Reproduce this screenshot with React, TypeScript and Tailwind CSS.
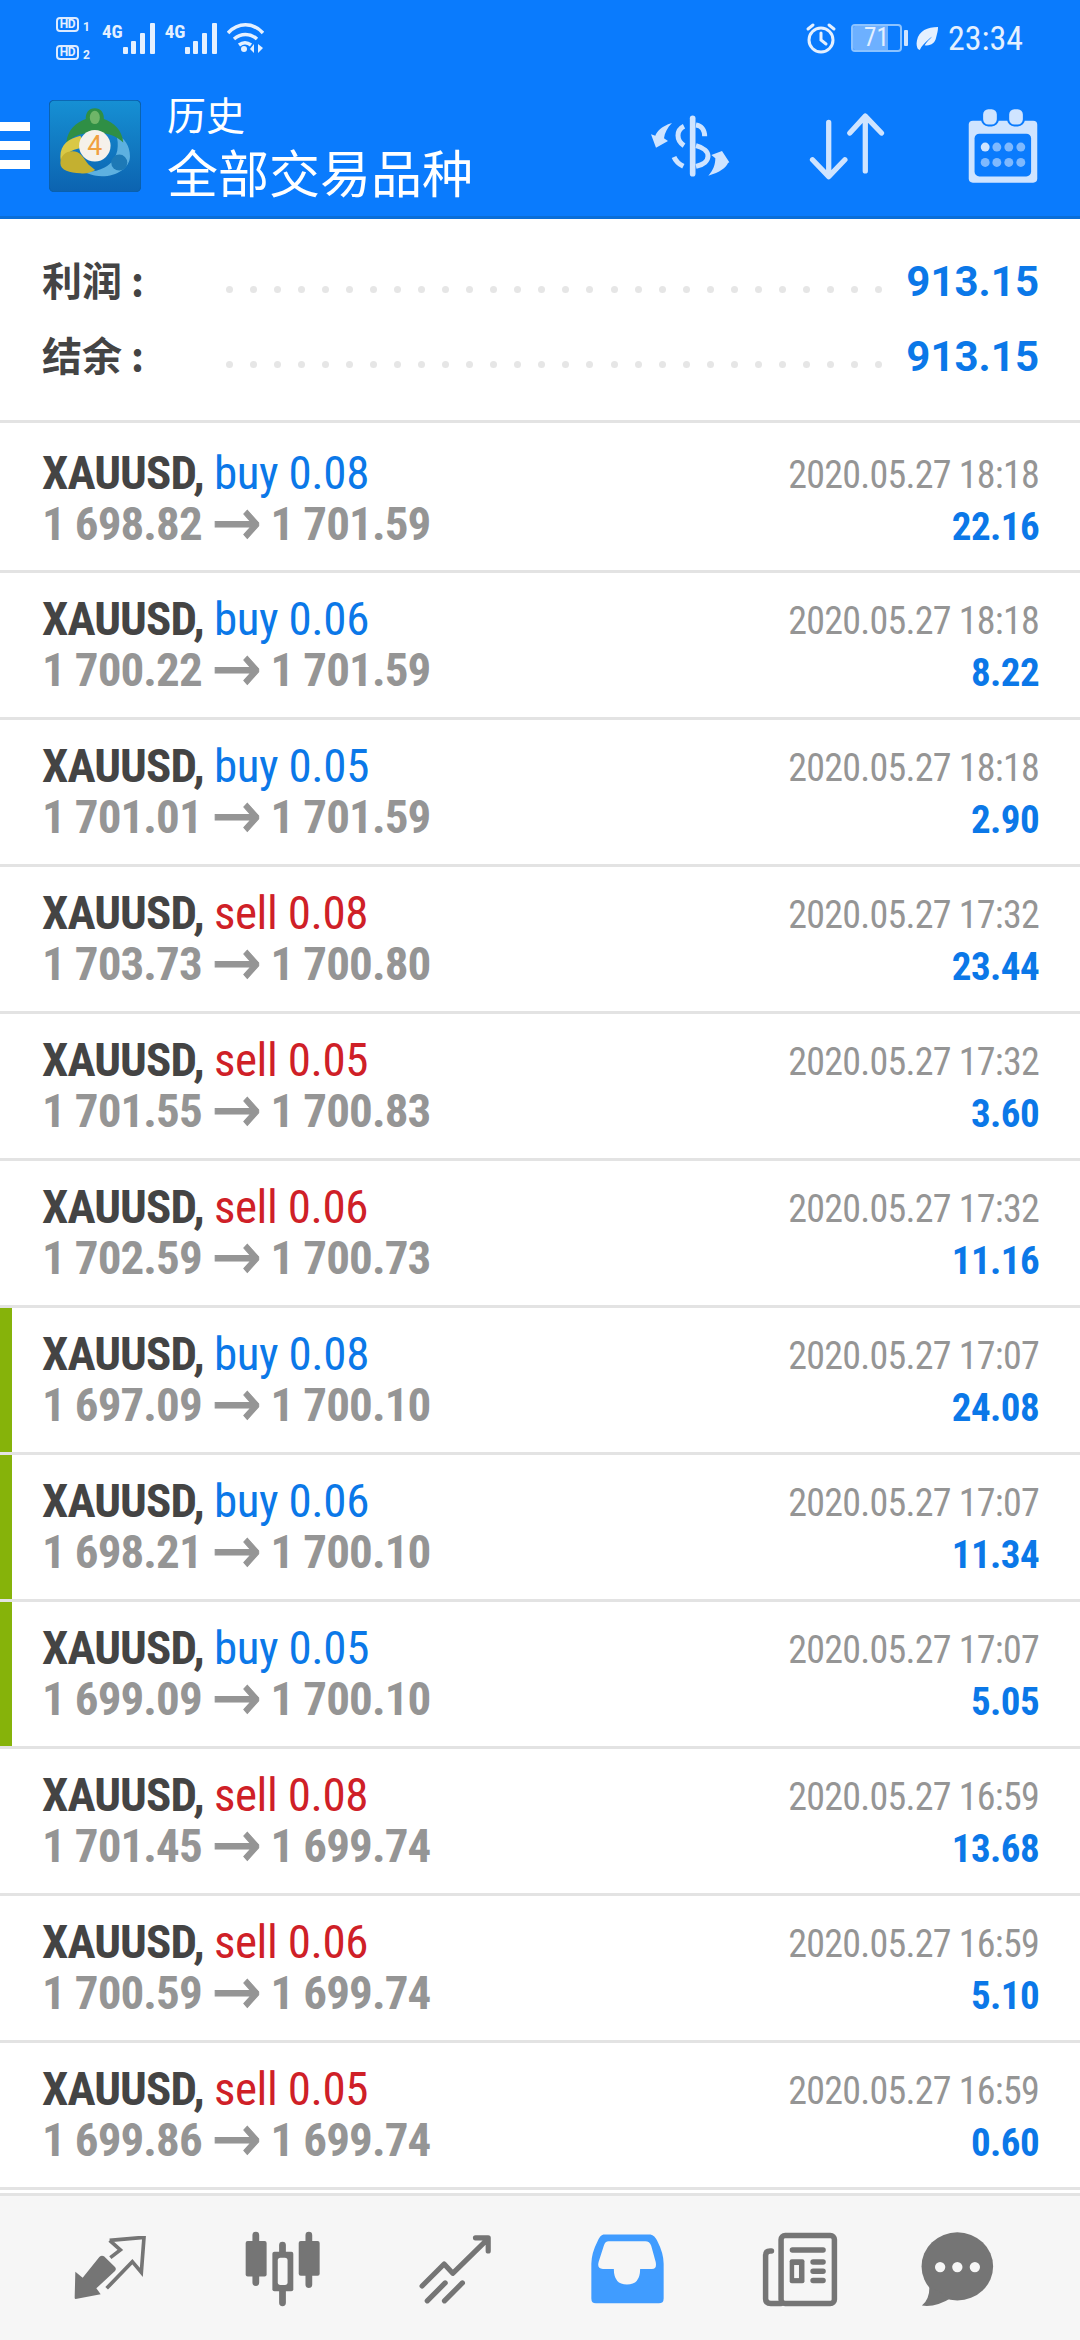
const G = "#757575";
const L = "#cfe4ff";
const BLUE = "#0a7bfd";

const trades = [
  { side: "buy", vol: "0.08", open: "1 698.82", close: "1 701.59", time: "2020.05.27 18:18", profit: "22.16", mark: false },
  { side: "buy", vol: "0.06", open: "1 700.22", close: "1 701.59", time: "2020.05.27 18:18", profit: "8.22", mark: false },
  { side: "buy", vol: "0.05", open: "1 701.01", close: "1 701.59", time: "2020.05.27 18:18", profit: "2.90", mark: false },
  { side: "sell", vol: "0.08", open: "1 703.73", close: "1 700.80", time: "2020.05.27 17:32", profit: "23.44", mark: false },
  { side: "sell", vol: "0.05", open: "1 701.55", close: "1 700.83", time: "2020.05.27 17:32", profit: "3.60", mark: false },
  { side: "sell", vol: "0.06", open: "1 702.59", close: "1 700.73", time: "2020.05.27 17:32", profit: "11.16", mark: false },
  { side: "buy", vol: "0.08", open: "1 697.09", close: "1 700.10", time: "2020.05.27 17:07", profit: "24.08", mark: true },
  { side: "buy", vol: "0.06", open: "1 698.21", close: "1 700.10", time: "2020.05.27 17:07", profit: "11.34", mark: true },
  { side: "buy", vol: "0.05", open: "1 699.09", close: "1 700.10", time: "2020.05.27 17:07", profit: "5.05", mark: true },
  { side: "sell", vol: "0.08", open: "1 701.45", close: "1 699.74", time: "2020.05.27 16:59", profit: "13.68", mark: false },
  { side: "sell", vol: "0.06", open: "1 700.59", close: "1 699.74", time: "2020.05.27 16:59", profit: "5.10", mark: false },
  { side: "sell", vol: "0.05", open: "1 699.86", close: "1 699.74", time: "2020.05.27 16:59", profit: "0.60", mark: false },
];

const Logo = () => (
  <svg width="92" height="92" viewBox="28 33 275 275" className="shrink-0">
    <defs>
      <linearGradient id="lg" x1="0" y1="0" x2="0" y2="1">
        <stop offset="0" stopColor="#1690d4" />
        <stop offset="1" stopColor="#0c63b0" />
      </linearGradient>
    </defs>
    <rect x="29" y="34" width="273" height="273" rx="14" fill="url(#lg)" stroke="#0a5ea8" strokeWidth="3" />
    <path d="M228 135c26 12 42 36 42 66 0 34-38 60-84 60-24 0-44-8-58-14 26 2 48-2 66-12 22-12 32-26 38-50 3-16 2-34-4-50z" fill="#5db0e0" />
    <circle cx="238" cy="220" r="24" fill="#1d79b6" />
    <path d="M165 58c18 0 28 14 27 32 30 10 55 34 58 70-24-22-50-30-85-28-35-2-61 6-85 28 3-36 28-60 58-70-1-18 9-32 27-32z" fill="#2f8f45" />
    <ellipse cx="165" cy="85" rx="15" ry="20" fill="#6fb568" />
    <path d="M122 140c-34 8-60 26-60 62 0 8 2 14 4 18 10-30 40-44 70-44z" fill="#d9c845" />
    <path d="M62 222c0-22 16-36 36-36 24 0 32 18 48 40l20 16c-12 8-28 12-44 10-32-2-60-8-60-30z" fill="#c4b030" />
    <circle cx="165" cy="170" r="47" fill="#f5f1ea" />
    <text x="165" y="198" textAnchor="middle" fontSize="80" fontFamily="Roboto, sans-serif" fill="#f0a040">4</text>
  </svg>
);

const DollarIcon = () => (
  <svg width="100" height="90" viewBox="0 0 300 270" fill={L}>
    <g fill="none" stroke={L} strokeWidth="15">
      <path d="M158 52V218" strokeWidth="17" strokeLinecap="round" />
      <path d="M132 76C108 88 108 118 132 134" />
      <path d="M168 72C184 74 194 86 194 106" />
      <path d="M168 134C216 146 216 186 168 196" />
      <path d="M102 168C108 182 118 190 130 196" />
    </g>
    <path d="M96 66C62 76 50 94 46 104L33 100L48 140L84 120L72 112C74 96 82 80 96 66Z" />
    <path d="M205 224C240 214 258 200 264 186L268 184L246 150L214 162L226 172C226 190 220 208 205 224Z" />
  </svg>
);

const SortIcon = () => (
  <svg width="76" height="70" viewBox="780 340 216 198" fill="none" stroke={L} strokeWidth="15" strokeLinecap="round" strokeLinejoin="round">
    <path d="M836 372V525M790 478l46 48 46-48" />
    <path d="M940 510V354M896 402l44-48 46 48" />
  </svg>
);

const CalendarIcon = () => (
  <svg width="70" height="74" viewBox="1243 328 200 216">
    <rect x="1243" y="362" width="200" height="181" rx="12" fill={L} />
    <rect x="1260" y="400" width="165" height="125" rx="14" fill={BLUE} />
    <rect x="1282" y="326" width="46" height="50" rx="18" fill={L} stroke={BLUE} strokeWidth="6" />
    <rect x="1358" y="326" width="46" height="50" rx="18" fill={L} stroke={BLUE} strokeWidth="6" />
    <circle cx="1291" cy="439" r="13" fill={L} />
    {[1325, 1360, 1395].map((x) => <circle key={x} cx={x} cy="439" r="13" fill="#7fb9fe" />)}
    {[1291, 1325, 1360, 1395].map((x) => <circle key={x} cx={x} cy="484" r="13" fill="#7fb9fe" />)}
  </svg>
);

const Signal = () => (
  <svg width="33" height="31" viewBox="0 0 33 31" fill="#e4f0ff" className="shrink-0">
    <rect x="0" y="24" width="5" height="7" rx="1" />
    <rect x="8" y="18" width="5" height="13" rx="1" />
    <rect x="17" y="10" width="5" height="21" rx="1" />
    <rect x="27" y="0" width="5" height="31" rx="1" />
  </svg>
);

const Wifi = () => (
  <svg width="37" height="30" viewBox="0 0 37 30" fill="none" stroke="#e4f0ff" strokeWidth="3.5" className="shrink-0">
    <path d="M1 10c10-11 25-11 35 0M7 16c7-6 16-6 23 0M12 22c4-3 8-3 12 0" />
    <circle cx="17" cy="26" r="3" fill="#e4f0ff" stroke="none" />
    <path d="M27 21l-4 5 4 4zM31 21v9l5-5z" fill="#e4f0ff" stroke="none" />
  </svg>
);

const Alarm = () => (
  <svg width="32" height="32" viewBox="0 0 32 32" fill="none" stroke="#e4f0ff" strokeWidth="3" strokeLinecap="round" className="shrink-0">
    <circle cx="16" cy="18" r="12" />
    <path d="M16 11v7l5 4M3 7l5-4M29 7l-5-4" />
  </svg>
);

const Battery = () => (
  <div className="flex items-center gap-[2px]">
    <div className="relative w-[51px] h-[28px] rounded-[4px] border-2 border-[#8cc3ff] overflow-hidden">
      <div className="absolute left-0 top-0 bottom-0 w-[75%] bg-[#6db0ff]" />
      <span className="relative block text-center text-[25px] leading-[24px] text-[#e4f0ff] [font-stretch:75%]">71</span>
    </div>
    <div className="w-[4px] h-[16px] bg-[#cfe4ff] rounded-[1px]" />
  </div>
);

const Leaf = () => (
  <svg width="23" height="25" viewBox="0 0 24 26" fill="#e4f0ff" className="shrink-0">
    <path d="M23 1C12 1 3 5 1 15c-1 4 0 7 1 9l2 1c1-2 2-4 4-6 3-3 6-6 9-8-3 3-6 6-8 9 6 1 11-2 12-8 1-4 2-7 2-11z" />
  </svg>
);

const SimBadge = ({ n }: { n: string }) => (
  <div className="flex items-end gap-[4px]">
    <span className="w-[23px] h-[15px] rounded-[4px] border-2 border-[#dcebff] text-[#e4f0ff] text-[12px] leading-[11px] font-bold text-center tracking-[-0.5px]">HD</span>
    <span className="text-[12px] leading-[10px] text-[#e4f0ff] font-bold">{n}</span>
  </div>
);

const NavTrade = () => (
  <svg width="72" height="66" viewBox="213 193 216 198">
    <path d="M217 300l22 18 50-62q7-7 14-2l33 32q5 6 0 12l-56 52 13 18-75 14q-3 0-3-4z" fill={G} />
    <path d="M320 206l103-9-8 105-27-32-77 80M322 258l30-23-32-29" fill="none" stroke={G} strokeWidth="11" />
  </svg>
);

const NavCandles = () => (
  <svg width="75" height="76" viewBox="706 176 222 224" fill={G}>
    <path d="M738 188V328M817 217V388M895 188V334" stroke={G} strokeWidth="20" strokeLinecap="round" />
    <rect x="708" y="205" width="62" height="105" rx="6" />
    <rect x="865" y="205" width="62" height="103" rx="6" />
    <rect x="787" y="237" width="62" height="117" rx="6" />
    <rect x="803" y="255" width="29" height="80" rx="8" fill="#f6f6f6" />
  </svg>
);

const NavTrend = () => (
  <svg width="73" height="71" viewBox="1212 182 212 206" fill="none" stroke={G} strokeWidth="15" strokeLinecap="round" strokeLinejoin="round">
    <path d="M1221 333l64-64 25 27 100-98M1376 193h37v38" />
    <path d="M1236 376l52-52M1286 376l52-52" />
  </svg>
);

const NavInbox = () => (
  <svg width="73" height="70" viewBox="146 184 211 202">
    <path
      fillRule="evenodd"
      fill="#409cff"
      d="M182 185H318Q330 187 338 205Q356 240 356 270V370Q356 384 342 384H160Q147 384 147 370V270Q147 240 165 205Q172 187 182 185ZM197 205H303Q315 205 320 218L333 265Q337 285 322 285H288Q288 330 250 330Q212 330 212 285H180Q163 285 168 265L183 218Q187 205 197 205Z"
    />
  </svg>
);

const NavNews = () => (
  <svg width="76" height="75" viewBox="645 176 220 218" fill="none" stroke={G} strokeWidth="16" strokeLinecap="round">
    <rect x="700" y="186" width="155" height="198" rx="12" />
    <path d="M672 231H668Q655 231 655 244V370Q655 384 670 384H700" />
    <path d="M733 228H822M793 263H822M793 290H822M793 317H822" />
    <rect x="725" y="255" width="43" height="70" rx="6" fill={G} stroke="none" />
    <rect x="738" y="272" width="14" height="38" fill="#f6f6f6" stroke="none" />
  </svg>
);

const NavChat = () => (
  <svg width="73" height="75" viewBox="1108 176 211 218" fill={G}>
    <ellipse cx="1213" cy="276" rx="104" ry="99" />
    <path d="M1132 335Q1132 372 1110 390Q1150 396 1195 368Z" />
    <circle cx="1163" cy="278" r="15" fill="#f6f6f6" />
    <circle cx="1213" cy="278" r="15" fill="#f6f6f6" />
    <circle cx="1264" cy="278" r="15" fill="#f6f6f6" />
  </svg>
);

const SummaryRow = ({ label, value }: { label: string; value: string }) => (
  <div className="h-[75px] flex items-center pl-[42px] pr-[41px]">
    <span className="w-[184px] pb-[6px] text-[40px] font-bold text-[#444] [font-family:'Noto_Sans_CJK_SC',sans-serif] whitespace-pre">{label}<span className="ml-[9px]">:</span></span>
    <div className="flex-1 flex justify-between mt-[16px]">
      {Array.from({ length: 28 }).map((_, i) => (
        <span key={i} className="w-[7px] h-[7px] rounded-full bg-[#e6e6e6]" />
      ))}
    </div>
    <span className="w-[157px] text-right text-[42px] leading-none font-bold text-[#0b78e8]">{value}</span>
  </div>
);

export default function App() {
  return (
    <div className="w-[1080px] h-[2340px] bg-white flex flex-col overflow-hidden [font-family:Roboto,sans-serif]">
      <header className="h-[219px] bg-[#0a7bfd] border-b-[3px] border-[#0a6ed8] shrink-0">
        <div className="h-[76px] flex items-center justify-between pl-[56px] pr-[57px]">
          <div className="flex items-center">
            <div className="flex flex-col gap-[13px] w-[46px]">
              <SimBadge n="1" />
              <SimBadge n="2" />
            </div>
            <div className="flex items-end"><span className="text-[19px] leading-[17px] text-[#e4f0ff] font-bold self-start [font-stretch:75%]">4G</span><Signal /></div>
            <div className="flex items-end ml-[9px]"><span className="text-[19px] leading-[17px] text-[#e4f0ff] font-bold self-start [font-stretch:75%]">4G</span><Signal /></div>
            <div className="ml-[9px]"><Wifi /></div>
          </div>
          <div className="flex items-center">
            <Alarm />
            <div className="w-[14px]" />
            <Battery />
            <div className="w-[8px]" />
            <Leaf />
            <div className="w-[9px]" />
            <span className="text-[34px] leading-none text-[#e4f0ff] [font-stretch:75%]">23:34</span>
          </div>
        </div>
        <div className="h-[139px] flex items-center">
          <div className="w-[30px] flex flex-col gap-[10px] mr-[19px] shrink-0">
            <div className="h-[9px] bg-white" />
            <div className="h-[9px] bg-white" />
            <div className="h-[9px] bg-white" />
          </div>
          <Logo />
          <div className="ml-[26px] flex flex-col [font-family:'Noto_Sans_CJK_SC',sans-serif] text-white">
            <span className="text-[39px] leading-[50px]">历史</span>
            <span className="text-[51px] leading-[66px]">全部交易品种</span>
          </div>
          <div className="ml-auto flex items-center pr-[42px]">
            <DollarIcon />
            <div className="w-[69px]" />
            <SortIcon />
            <div className="w-[83px]" />
            <CalendarIcon />
          </div>
        </div>
      </header>

      <section className="h-[204px] pt-[25px] border-b-[3px] border-[#e3e3e3] shrink-0">
        <SummaryRow label="利润" value="913.15" />
        <SummaryRow label="结余" value="913.15" />
      </section>

      <div className="flex-1 flex flex-col">
        {trades.map((t, i) => (
          <div
            key={i}
            className={`relative ${i === 0 ? "h-[150px] pt-[25px]" : "h-[147px] pt-[21px]"} border-b-[3px] border-[#e3e3e3] pl-[42px] pr-[41px] flex justify-between`}
          >
            {t.mark && <div className="absolute left-0 top-0 bottom-0 w-[12px] bg-[#86b30a]" />}
            <div className="flex flex-col [font-stretch:75%]">
              <div className="text-[47px] leading-[50px] whitespace-pre">
                <span className="font-bold text-[#444] tracking-[-0.9px]">XAUUSD, </span>
                <span className={`tracking-[-0.4px] ${t.side === "buy" ? "text-[#0b78e8]" : "text-[#cf2027]"}`}>{t.side} {t.vol}</span>
              </div>
              <div className="text-[47px] leading-[51px] font-bold text-[#959595] whitespace-pre tracking-[-0.9px]">
                {t.open} <span className="relative top-[5px] [font-family:'DejaVu_Sans',sans-serif] text-[66px] font-normal leading-[0] [-webkit-text-stroke:1px_#959595]">→</span> {t.close}
              </div>
            </div>
            <div className="flex flex-col items-end [font-stretch:75%] pt-[1px]">
              <div className="text-[38px] leading-[52px] text-[#959595] whitespace-pre tracking-[-0.75px]">{t.time}</div>
              <div className="text-[39px] leading-[52px] font-bold text-[#0b78e8] tracking-[-0.6px]">{t.profit}</div>
            </div>
          </div>
        ))}
        <div className="h-[3px] bg-white shrink-0" />
        <nav className="flex-1 border-t-[3px] border-[#e3e3e3] bg-[#f6f6f6] flex items-center pl-[24px]">
          {[NavTrade, NavCandles, NavTrend, NavInbox, NavNews].map((Icon, i) => (
            <div key={i} className="w-[172.5px] flex justify-center mt-[2px]"><Icon /></div>
          ))}
          <div className="w-[172.5px] -ml-[15px] flex justify-center mt-[2px]"><NavChat /></div>
        </nav>
      </div>
    </div>
  );
}
